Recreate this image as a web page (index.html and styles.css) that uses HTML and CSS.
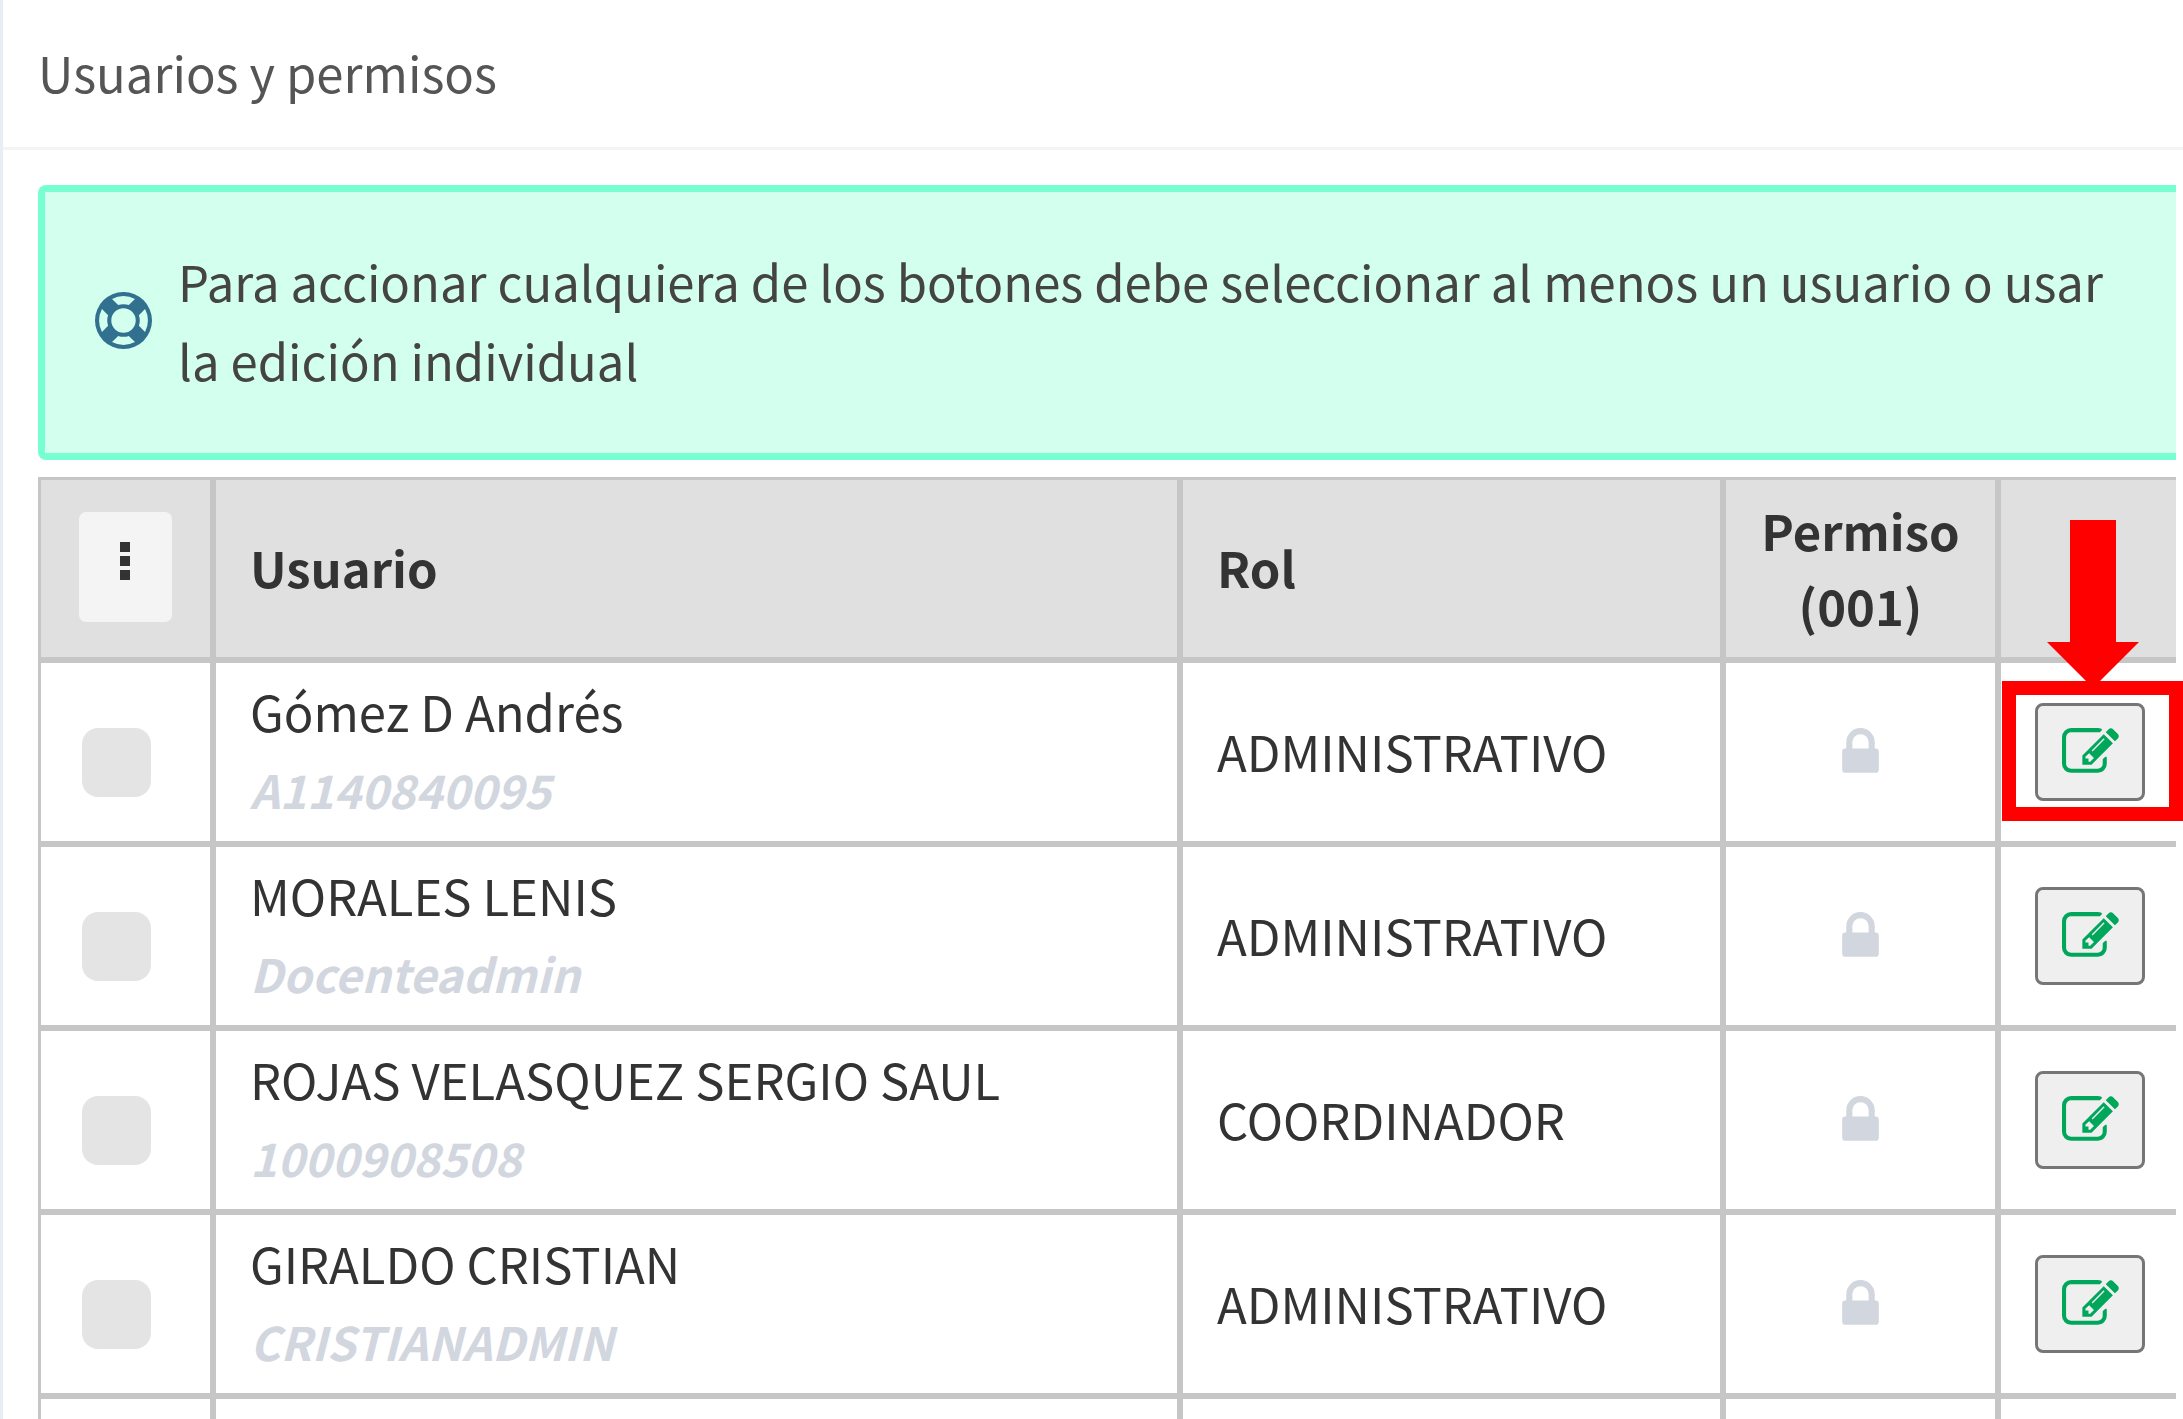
FILE: index.html
```html
<!DOCTYPE html>
<html lang="es">
<head>
  <meta charset="UTF-8">
  <meta name="viewport" content="width=device-width, initial-scale=1.0">
  <title>Usuarios y permisos</title>
  <link rel="stylesheet" href="styles.css">
</head>
<body>
  <svg class="sprite" aria-hidden="true">
    <symbol id="icon-ring" viewBox="0 0 1792 1792"><path d="M896 0q182 0 348 71t286 191 191 286 71 348-71 348-191 286-286 191-348 71-348-71-286-191-191-286-71-348 71-348 191-286 286-191 348-71zm0 128q-190 0-361 90l194 194q82-28 167-28t167 28l194-194q-171-90-361-90zm-678 1129l194-194q-28-82-28-167t28-167l-194-194q-90 171-90 361t90 361zm678 407q190 0 361-90l-194-194q-82 28-167 28t-167-28l-194 194q171 90 361 90zm0-384q159 0 271.5-112.5t112.5-271.5-112.5-271.5-271.5-112.5-271.5 112.5-112.5 271.5 112.5 271.5 271.5 112.5zm484-217l194 194q90-171 90-361t-90-361l-194 194q28 82 28 167t-28 167z"/></symbol>
    <symbol id="icon-lock" viewBox="0 0 1792 1792"><path d="M640 768h512v-192q0-106-75-181t-181-75-181 75-75 181v192zm832 96v576q0 40-28 68t-68 28h-960q-40 0-68-28t-28-68v-576q0-40 28-68t68-28h32v-192q0-184 132-316t316-132 316 132 132 316v192h32q40 0 68 28t28 68z"/></symbol>
    <symbol id="icon-edit" viewBox="0 0 1792 1792"><path d="M888 1184l116-116-152-152-116 116v56h96v96h56zm440-720q-16-16-33 1l-350 350q-17 17-1 33t33-1l350-350q17-17 1-33zm80 594v190q0 119-84.5 203.5t-203.5 84.5h-832q-119 0-203.5-84.5t-84.5-203.5v-832q0-119 84.5-203.5t203.5-84.5h832q63 0 117 25 15 7 18 23 3 17-9 29l-49 49q-14 14-32 8-23-6-45-6h-832q-66 0-113 47t-47 113v832q0 66 47 113t113 47h832q66 0 113-47t47-113v-126q0-13 9-22l64-64q15-15 35-7t20 29zm-96-738l288 288-672 672h-288v-288zm444 132l-92 92-288-288 92-92q28-28 68-28t68 28l152 152q28 28 28 68t-28 68z"/></symbol>
  </svg>

  <div class="panel">
    <h1 class="panel-title">Usuarios y permisos</h1>
    <div class="panel-body">
      <div class="alert">
        <svg class="icon"><use href="#icon-ring"/></svg>
        <p>Para accionar cualquiera de los botones debe seleccionar al menos un usuario o usar la edición individual</p>
      </div>

      <table class="users">
        <colgroup>
          <col class="col-check">
          <col>
          <col class="col-role">
          <col class="col-perm">
          <col class="col-action">
        </colgroup>
        <thead>
          <tr>
            <th>
              <button class="menu-btn" type="button" aria-label="Opciones">
                <svg width="12" height="38" viewBox="0 0 12 38"><path d="M1 0h10v10H1zM1 14h10v10H1zM1 28h10v10H1z"/></svg>
              </button>
            </th>
            <th>Usuario</th>
            <th>Rol</th>
            <th class="center">Permiso (001)</th>
            <th></th>
          </tr>
        </thead>
        <tbody>
          <tr>
            <td><input type="checkbox" aria-label="Gómez D Andrés"></td>
            <td>Gómez D Andrés<em>A1140840095</em></td>
            <td>ADMINISTRATIVO</td>
            <td class="center"><svg class="icon lock"><use href="#icon-lock"/></svg></td>
            <td class="action">
              <button class="edit-btn" type="button" aria-label="Editar"><svg class="icon"><use href="#icon-edit"/></svg></button>
              <div class="highlight">
                <svg class="arrow" width="92" height="170" viewBox="0 0 92 170"><path d="M23 0h46v122h23l-46 46-46-46h23z"/></svg>
              </div>
            </td>
          </tr>
          <tr>
            <td><input type="checkbox" aria-label="MORALES LENIS"></td>
            <td>MORALES LENIS<em>Docenteadmin</em></td>
            <td>ADMINISTRATIVO</td>
            <td class="center"><svg class="icon lock"><use href="#icon-lock"/></svg></td>
            <td class="action"><button class="edit-btn" type="button" aria-label="Editar"><svg class="icon"><use href="#icon-edit"/></svg></button></td>
          </tr>
          <tr>
            <td><input type="checkbox" aria-label="ROJAS VELASQUEZ SERGIO SAUL"></td>
            <td>ROJAS VELASQUEZ SERGIO SAUL<em>1000908508</em></td>
            <td>COORDINADOR</td>
            <td class="center"><svg class="icon lock"><use href="#icon-lock"/></svg></td>
            <td class="action"><button class="edit-btn" type="button" aria-label="Editar"><svg class="icon"><use href="#icon-edit"/></svg></button></td>
          </tr>
          <tr>
            <td><input type="checkbox" aria-label="GIRALDO CRISTIAN"></td>
            <td>GIRALDO CRISTIAN<em>CRISTIANADMIN</em></td>
            <td>ADMINISTRATIVO</td>
            <td class="center"><svg class="icon lock"><use href="#icon-lock"/></svg></td>
            <td class="action"><button class="edit-btn" type="button" aria-label="Editar"><svg class="icon"><use href="#icon-edit"/></svg></button></td>
          </tr>
          <tr class="empty">
            <td></td>
            <td></td>
            <td></td>
            <td></td>
            <td></td>
          </tr>
        </tbody>
      </table>
    </div>
  </div>
</body>
</html>
```
FILE: styles.css
```css
* { box-sizing: border-box; }
body { margin: 0; background: #fff; color: #333; font-family: "Noto Sans CJK SC", "Open Sans", sans-serif; font-size: 49px; line-height: 79px; }
.sprite { display: none; }
.icon { width: 57px; height: 57px; flex: none; fill: currentColor; }

.panel { min-height: 100vh; border-left: 3px solid #e8ecf4; }
.panel-title { margin: 0; padding: 32px 35px 36px; border-bottom: 3px solid #f4f4f4; color: #555; font-size: 49px; font-weight: 400; }
.panel-body { padding: 35px 7px 0 35px; }

.alert { display: flex; align-items: center; gap: 26px; margin-bottom: 17px; padding: 49px 50px 54px; background: #d2ffee; border: 7px solid #77ffd2; border-right: 0; border-radius: 8px 0 0 8px; }
.alert .icon { color: #31708f; }
.alert p { margin: 0; color: #444; }

.users { width: 100%; table-layout: fixed; border-collapse: separate; border-spacing: 0; }
.col-check { width: 175px; }
.col-role { width: 25.4%; }
.col-perm { width: 275px; }
.col-action { width: 178px; }
th, td { height: 184px; padding: 0 34px 4px; border: 3px solid #c6c6c6; text-align: left; vertical-align: middle; }
th { height: 183px; background: #e0e0e0; font-weight: 700; line-height: 75px; }
th:last-child, td:last-child { border-right: 0; }
td em { display: block; color: #d2d6de; font-size: 46px; font-weight: 700; }
.empty td { height: 23px; border-bottom: 0; }
.center { text-align: center; }
.lock { display: block; margin: 4px auto 0; color: #d2d6de; }

.menu-btn { display: flex; justify-content: center; width: 93px; height: 110px; margin-left: 4px; padding: 30px 2px 0 0; background: #f4f4f4; border: 0; border-radius: 7px; cursor: pointer; }
.menu-btn svg { fill: #333; }
input[type="checkbox"] { display: block; appearance: none; width: 69px; height: 69px; margin: 24px 0 0 7px; background: #e4e4e4; border-radius: 16px; }
.edit-btn { display: flex; align-items: center; justify-content: center; width: 110px; height: 98px; padding: 0; background: #efefef; border: 3px solid #767676; border-radius: 8px; color: #00a65a; cursor: pointer; }

td.action { position: relative; padding-bottom: 0; }
.highlight { position: absolute; top: 18px; left: 1px; right: -7px; height: 140px; border: 14px solid #f00; }
.arrow { position: absolute; left: 31px; top: -175px; fill: #f00; }
```
